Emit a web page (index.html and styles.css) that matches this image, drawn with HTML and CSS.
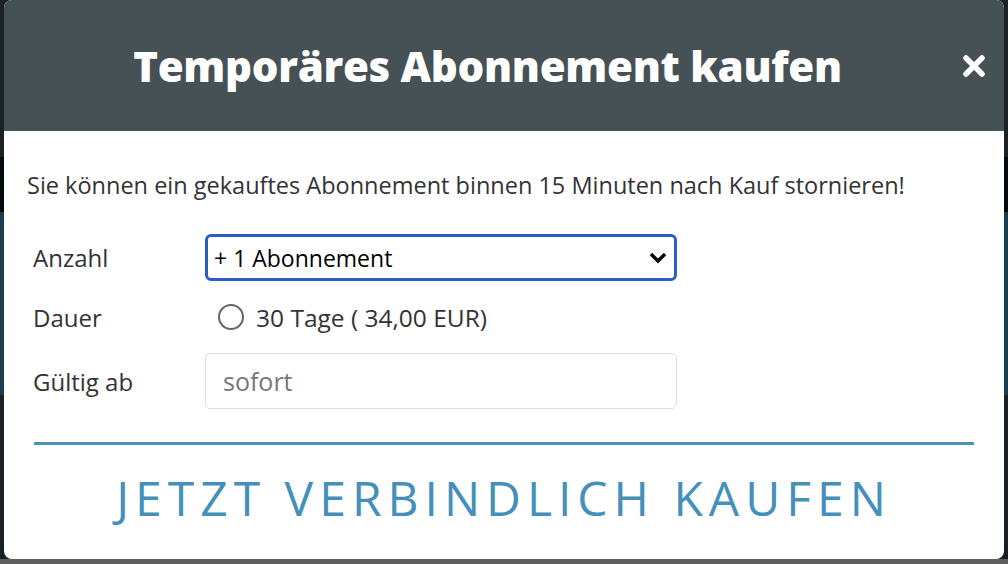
FILE: index.html
```html
<!DOCTYPE html>
<html lang="de">
  <head>
    <meta charset="UTF-8" />
    <meta name="viewport" content="width=device-width, initial-scale=1.0" />
    <title>Temporäres Abonnement kaufen</title>
    <link rel="stylesheet" href="styles.css">
  </head>
  <body>
    <!-- Modal dialog -->
    <div class="modal">
      <div class="modal-header">
        <h1>Temporäres Abonnement kaufen</h1>
        <svg class="close" width="22" height="22" viewBox="0 0 22 22"><path d="M3 3l16 16M19 3L3 19" stroke="#fff" stroke-width="5.5" stroke-linecap="round"/></svg>
      </div>
      <div class="modal-body">
        <p class="notice">Sie können ein gekauftes Abonnement binnen 15 Minuten nach Kauf stornieren!</p>
        <div class="form-row row-select">
          <label>Anzahl</label>
          <div class="field">
            <div class="select">
              <span>+ 1 Abonnement</span>
              <svg width="20" height="14" viewBox="0 0 20 14"><path d="M3 3l7 7 7-7" fill="none" stroke="#000" stroke-width="3.4"/></svg>
            </div>
          </div>
        </div>
        <div class="form-row row-radio">
          <label>Dauer</label>
          <div class="field radio-field">
            <span class="radio"></span>
            <span>30 Tage ( 34,00 EUR)</span>
          </div>
        </div>
        <div class="form-row">
          <label>Gültig ab</label>
          <div class="field">
            <div class="input">sofort</div>
          </div>
        </div>
        <div class="divider"></div>
        <div class="buy">JETZT VERBINDLICH KAUFEN</div>
      </div>
    </div>
  </body>
</html>
```

FILE: styles.css
```css
/* Page backdrop */
body {
  margin: 0;
  height: 564px;
  font-family: "Open Sans", Arial, sans-serif;
  color: #333;
  background: linear-gradient(to bottom, #1b2226 0, #1b2226 157px, #060a0d 157px, #060a0d 212px, #1b3e52 212px, #1b3e52 395px, #1a2022 395px, #1a2022 559px, #5f5f5f 559px);
  overflow: hidden;
}
.modal {
  margin: 0 4px;
  height: 559px;
  background-color: #fff;
  border-radius: 8px;
  overflow: hidden;
}
.modal-header {
  height: 131px;
  padding-right: 33px;
  background-color: #465156;
  display: flex;
  align-items: center;
  justify-content: center;
  position: relative;
}
.modal-header h1 {
  margin: 0;
  color: #fff;
  font-size: 42px;
  font-weight: 800;
  letter-spacing: -0.3px;
}
.close {
  position: absolute;
  right: 19px;
  top: 55px;
}
.modal-body {
  padding: 0 30px 0 23px;
}
.notice {
  margin: 38px 0 0;
  font-size: 23.5px;
  line-height: 32px;
}
.form-row {
  display: flex;
  align-items: center;
}
.row-select {
  margin-top: 33px;
  height: 47px;
}
.row-radio {
  height: 72px;
}
.form-row label {
  width: 172px;
  padding-left: 6px;
  font-size: 24px;
  color: #333;
}
.field {
  width: 472px;
}
.select {
  height: 47px;
  box-sizing: border-box;
  border: 3px solid #2a5ec6;
  border-radius: 6px;
  display: flex;
  align-items: center;
  justify-content: space-between;
  padding: 0 6px 0 6px;
  font-size: 23px;
  color: #000;
}
.radio-field {
  display: flex;
  align-items: center;
  font-size: 24.5px;
  padding-left: 13px;
}
.radio {
  width: 22px;
  height: 22px;
  border: 2px solid #666;
  border-radius: 50%;
  margin-right: 12px;
}
.input {
  height: 56px;
  box-sizing: border-box;
  border: 1px solid #ddd;
  border-radius: 5px;
  padding-left: 17px;
  display: flex;
  align-items: center;
  font-size: 25px;
  color: #777;
}
.divider {
  height: 3px;
  background-color: #4a93bb;
  margin: 33px 0 0 7px;
}
.buy {
  text-align: center;
  margin-top: 23px;
  padding-left: 7px;
  font-size: 48px;
  line-height: 60px;
  letter-spacing: 6px;
  color: #4490bb;
}
```
